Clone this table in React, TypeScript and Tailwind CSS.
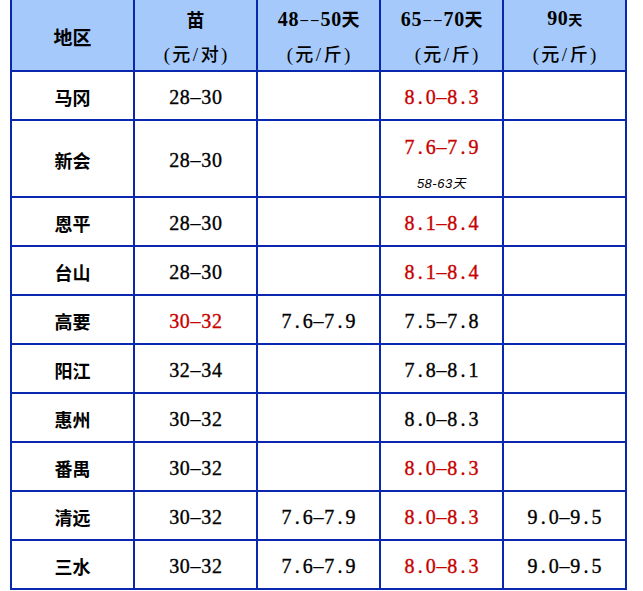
import React from 'react';

const cjk = "font-['Noto_Sans_CJK_SC',sans-serif]";
const serif = "font-['Liberation_Serif','Noto_Sans_CJK_SC',serif]";

// SimSun-style half-width chars: every char gets the same advance
const Num: React.FC<{ s: string; className?: string; small?: boolean }> = ({ s, className = '', small = false }) => (
  <span className={`inline-flex ${serif} ${className}`}>
    {s.split('').map((c, i) =>
      c === '-' ? (
        <span key={i} className={`inline-block w-[10.7px] text-center ${small ? 'text-[15px]' : ''}`}>
          –
        </span>
      ) : (
        <span key={i} className="inline-block w-[10.7px] text-center">
          {c}
        </span>
      ),
    )}
  </span>
);

type Val = { v: string; red?: boolean; note?: string } | null;

const rows: { name: string; cells: Val[] }[] = [
  { name: '马冈', cells: [{ v: '28-30' }, null, { v: '8.0-8.3', red: true }, null] },
  { name: '新会', cells: [{ v: '28-30' }, null, { v: '7.6-7.9', red: true, note: '58-63天' }, null] },
  { name: '恩平', cells: [{ v: '28-30' }, null, { v: '8.1-8.4', red: true }, null] },
  { name: '台山', cells: [{ v: '28-30' }, null, { v: '8.1-8.4', red: true }, null] },
  { name: '高要', cells: [{ v: '30-32', red: true }, { v: '7.6-7.9' }, { v: '7.5-7.8' }, null] },
  { name: '阳江', cells: [{ v: '32-34' }, null, { v: '7.8-8.1' }, null] },
  { name: '惠州', cells: [{ v: '30-32' }, null, { v: '8.0-8.3' }, null] },
  { name: '番禺', cells: [{ v: '30-32' }, null, { v: '8.0-8.3', red: true }, null] },
  { name: '清远', cells: [{ v: '30-32' }, { v: '7.6-7.9' }, { v: '8.0-8.3', red: true }, { v: '9.0-9.5' }] },
  { name: '三水', cells: [{ v: '30-32' }, { v: '7.6-7.9' }, { v: '8.0-8.3', red: true }, { v: '9.0-9.5' }] },
];

// "(元/斤)" with half-width punctuation
const Unit: React.FC<{ u: string }> = ({ u }) => (
  <span className="inline-flex items-baseline">
    <Num s="(" className="text-[19px]" />
    <span className={`text-[18px] ${cjk}`}>元</span>
    <Num s="/" className="text-[19px]" />
    <span className={`text-[18px] ${cjk}`}>{u}</span>
    <Num s=")" className="text-[19px]" />
  </span>
);

const HeadCell: React.FC<{ top: React.ReactNode; unit: string; shift?: boolean }> = ({ top, unit, shift }) => (
  <div className="bg-[#a6c9fc] flex flex-col items-center justify-center pt-[3px] text-black font-medium">
    <div className="leading-[34px] flex items-baseline">{top}</div>
    <div className={`leading-[34px] ${shift ? 'pl-[10px]' : ''}`}>
      <Unit u={unit} />
    </div>
  </div>
);

export default function App() {
  return (
    <div className="w-[643px] h-[591px] bg-white">
      <div className="ml-[10px] w-[617px] grid grid-cols-[repeat(5,121px)] grid-rows-[70px_47px_75px_repeat(8,47px)] gap-[2px] bg-[#0a27b0] px-[2px] pb-[2px]">
        {/* header */}
        <div className={`bg-[#a6c9fc] flex items-center justify-center pt-[5px] text-[19px] font-semibold ${cjk}`}>地区</div>
        <HeadCell top={<span className={`text-[18px] font-semibold ${cjk}`}>苗</span>} unit="对" />
        <HeadCell
          top={
            <>
              <Num s="48--50" small className="text-[20px] font-bold" />
              <span className={`text-[18px] font-semibold ${cjk}`}>天</span>
            </>
          }
          unit="斤"
        />
        <HeadCell
          top={
            <>
              <Num s="65--70" small className="text-[20px] font-bold" />
              <span className={`text-[18px] font-semibold ${cjk}`}>天</span>
            </>
          }
          unit="斤"
          shift
        />
        <HeadCell
          top={
            <>
              <Num s="90" className="text-[20px] font-bold" />
              <span className={`text-[14px] font-semibold ${cjk}`}>天</span>
            </>
          }
          unit="斤"
        />

        {/* body */}
        {rows.map((r) => (
          <React.Fragment key={r.name}>
            <div className={`bg-white flex items-center justify-center pt-[3px] text-[18px] font-semibold ${cjk}`}>{r.name}</div>
            {r.cells.map((c, i) => (
              <div key={i} className="bg-white flex flex-col items-center justify-center pt-[2px]">
                {c && !c.note && (
                  <Num
                    s={c.v}
                    className={`text-[20px] [-webkit-text-stroke:0.35px_currentColor] ${c.red ? 'text-[#c80000]' : 'text-black'}`}
                  />
                )}
                {c && c.note && (
                  <div className="flex flex-col items-center self-stretch h-full">
                    <Num
                      s={c.v}
                      className="text-[20px] [-webkit-text-stroke:0.35px_currentColor] text-[#c80000] leading-[20px] mt-[14px]"
                    />
                    <span className="mt-[20px] leading-[14px] text-[13px] tracking-[0.5px] italic font-['Liberation_Sans','Noto_Sans_CJK_SC',sans-serif] text-black">
                      {c.note}
                    </span>
                  </div>
                )}
              </div>
            ))}
          </React.Fragment>
        ))}
      </div>
    </div>
  );
}
